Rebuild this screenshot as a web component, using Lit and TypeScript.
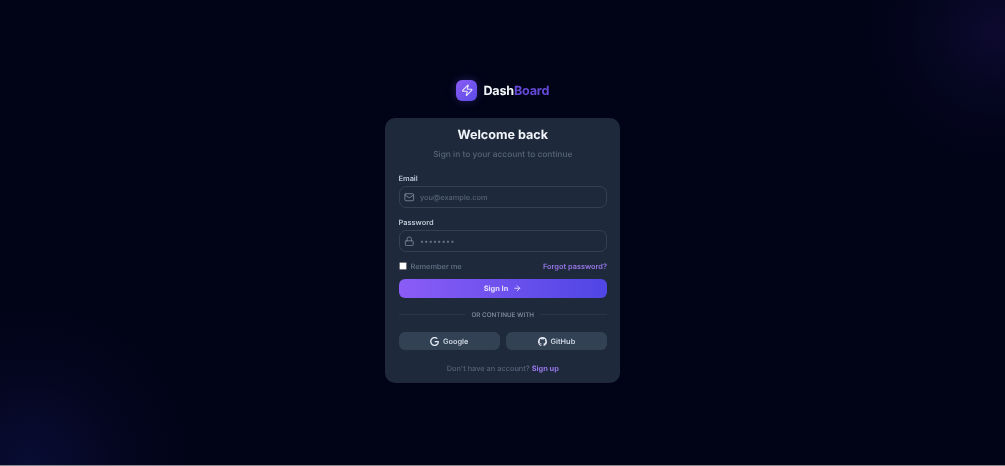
import { LitElement, html, css } from "lit";
import { customElement } from "lit/decorators.js";

@customElement("app-root")
export class AppRoot extends LitElement {
  static styles = css`
    :host {
      display: block;
      font-family: Inter, "Liberation Sans", sans-serif;
      text-rendering: geometricPrecision;
    }
    * { box-sizing: border-box; }
    .page {
      height: 466px;
      border-bottom: 1px solid #8a8a8e;
      display: flex;
      flex-direction: column;
      align-items: center;
      justify-content: flex-start;
      padding: 80px 0 0 0.5px;
      background:
        radial-gradient(circle at 99% 7%, rgba(88, 50, 200, 0.14) 0, rgba(60, 40, 160, 0.08) 60px, rgba(0, 0, 0, 0) 135px),
        radial-gradient(circle at 3% 100%, rgba(40, 50, 170, 0.2) 0, rgba(40, 40, 140, 0.1) 80px, rgba(0, 0, 0, 0) 165px),
        #010316;
    }
    .inner {
      display: flex;
      flex-direction: column;
      align-items: center;
      filter: blur(0.35px);
    }
    .brand {
      display: flex;
      align-items: center;
      gap: 6px;
      height: 21px;
      margin-bottom: 17px;
    }
    .logo {
      width: 21px;
      height: 21px;
      border-radius: 6px;
      background: linear-gradient(135deg, #8b5cf6, #5a4be6);
      box-shadow: 0 0 10px rgba(124, 92, 246, 0.3);
      display: flex;
      align-items: center;
      justify-content: center;
    }
    .logo svg { width: 12.5px; height: 12.5px; }
    .name {
      padding-top: 1px;
      font-size: 12.6px;
      font-weight: 700;
      color: #f1f5f9;
      letter-spacing: -0.2px;
    }
    .name span { color: #6549d8; }
    .card {
      width: 235px;
      height: 265px;
      background: #1e293b;
      border-radius: 10px;
      padding: 10px 13.25px 0;
      display: flex;
      flex-direction: column;
    }
    h1 {
      margin: 0;
      font-size: 12.6px;
      line-height: 16px;
      font-weight: 700;
      color: #f1f5f9;
      text-align: center;
    }
    .sub {
      margin: 5px 0 0;
      font-size: 8.4px;
      line-height: 12px;
      font-weight: 500;
      color: #566479;
      text-align: center;
    }
    label.lab {
      display: block;
      font-size: 7.4px;
      line-height: 10px;
      font-weight: 600;
      color: #bcc7d5;
    }
    .lab.first { margin-top: 13px; }
    .lab.second { margin-top: 10px; }
    .field {
      margin-top: 2px;
      height: 22px;
      border: 1px solid #334155;
      border-radius: 7px;
      background: #1e293b;
      display: flex;
      align-items: center;
      padding-left: 4.5px;
      gap: 5.5px;
      font-size: 7.4px;
      font-weight: 500;
      color: #566479;
    }
    .field svg { width: 10.5px; height: 10.5px; flex: none; }
    .dots { letter-spacing: 0.4px; font-size: 7.4px; color: #64748b; }
    .row {
      margin-top: 8px;
      height: 12px;
      display: flex;
      align-items: center;
      justify-content: space-between;
    }
    .rem {
      display: flex;
      align-items: center;
      gap: 4px;
      font-size: 7.4px;
      font-weight: 500;
      color: #64748b;
    }
    .check {
      width: 8px;
      height: 8px;
      background: #fff;
      border-radius: 1.5px;
      border: 0.5px solid #767676;
    }
    .link {
      font-size: 7.4px;
      font-weight: 600;
      color: #9676e6;
    }
    .signin {
      margin-top: 6.5px;
      height: 19px;
      padding-top: 1px;
      border-radius: 6px;
      background: linear-gradient(90deg, #8b5cf6, #4f46e5);
      display: flex;
      align-items: center;
      justify-content: center;
      gap: 5px;
      font-size: 7.4px;
      font-weight: 700;
      color: #e2dcfb;
    }
    .signin svg { width: 8.5px; height: 8.5px; }
    .divider {
      margin-top: 12px;
      display: flex;
      align-items: center;
      gap: 6px;
      font-size: 6.3px;
      line-height: 10px;
      font-weight: 600;
      color: #7a879a;
    }
    .divider i {
      flex: 1;
      height: 1px;
      background: #2a3648;
    }
    .socials {
      margin-top: 12px;
      display: grid;
      grid-template-columns: 1fr 1fr;
      gap: 6px;
    }
    .social {
      height: 18.5px;
      padding-top: 1px;
      border-radius: 6px;
      background: #334155;
      display: flex;
      align-items: center;
      justify-content: center;
      gap: 4px;
      font-size: 7.4px;
      font-weight: 600;
      color: #cbd5e1;
    }
    .social svg { width: 9px; height: 9px; }
    .foot {
      margin-top: 12.5px;
      font-size: 7.4px;
      line-height: 11px;
      font-weight: 500;
      text-align: center;
      color: #566479;
    }
    .foot b { font-weight: 700; color: #9676e6; }
  `;

  render() {
    return html`
      <div class="page">
        <div class="inner">
          <div class="brand">
            <div class="logo">
              <svg viewBox="0 0 24 24" fill="none" stroke="#ece9fd" stroke-width="2" stroke-linecap="round" stroke-linejoin="round">
                <path d="M4 14a1 1 0 0 1-.78-1.63l9.9-10.2a.5.5 0 0 1 .86.46l-1.92 6.02A1 1 0 0 0 13 10h7a1 1 0 0 1 .78 1.63l-9.9 10.2a.5.5 0 0 1-.86-.46l1.92-6.02A1 1 0 0 0 11 14z" />
              </svg>
            </div>
            <div class="name">Dash<span>Board</span></div>
          </div>
          <div class="card">
            <h1>Welcome back</h1>
            <p class="sub">Sign in to your account to continue</p>
            <label class="lab first">Email</label>
            <div class="field">
              <svg viewBox="0 0 24 24" fill="none" stroke="#7b889b" stroke-width="2" stroke-linecap="round" stroke-linejoin="round">
                <rect x="2" y="4" width="20" height="16" rx="2" />
                <path d="m22 7-8.97 5.7a1.94 1.94 0 0 1-2.06 0L2 7" />
              </svg>
              <span>you@example.com</span>
            </div>
            <label class="lab second">Password</label>
            <div class="field">
              <svg viewBox="0 0 24 24" fill="none" stroke="#7b889b" stroke-width="2" stroke-linecap="round" stroke-linejoin="round">
                <rect x="3" y="11" width="18" height="11" rx="2" />
                <path d="M7 11V7a5 5 0 0 1 10 0v4" />
              </svg>
              <span class="dots">••••••••</span>
            </div>
            <div class="row">
              <div class="rem"><span class="check"></span>Remember me</div>
              <span class="link">Forgot password?</span>
            </div>
            <div class="signin">
              <span>Sign In</span>
              <svg viewBox="0 0 24 24" fill="none" stroke="#e2dcfb" stroke-width="2.6" stroke-linecap="round" stroke-linejoin="round">
                <path d="M5 12h14" /><path d="m12 5 7 7-7 7" />
              </svg>
            </div>
            <div class="divider"><i></i><span>OR CONTINUE WITH</span><i></i></div>
            <div class="socials">
              <div class="social">
                <svg viewBox="0 0 24 24" fill="#e2e8f0">
                  <path d="M12.48 10.92v3.28h7.84c-.24 1.84-.85 3.18-1.79 4.12-1.15 1.15-2.94 2.4-6.05 2.4-4.83 0-8.6-3.89-8.6-8.72s3.77-8.72 8.6-8.72c2.6 0 4.5 1.02 5.9 2.34l2.31-2.31C18.75 1.44 16.13 0 12.48 0 5.87 0 .31 5.39.31 12s5.56 12 12.17 12c3.57 0 6.27-1.17 8.37-3.36 2.16-2.16 2.84-5.21 2.84-7.67 0-.76-.05-1.47-.17-2.05H12.48z" />
                </svg>
                <span>Google</span>
              </div>
              <div class="social">
                <svg viewBox="0 0 24 24" fill="#e2e8f0">
                  <path d="M12 .3a12 12 0 0 0-3.8 23.38c.6.12.83-.26.83-.57l-.02-2.23c-3.34.73-4.04-1.42-4.04-1.42-.55-1.39-1.34-1.76-1.34-1.76-1.08-.74.09-.73.09-.73 1.2.09 1.84 1.24 1.84 1.24 1.07 1.83 2.8 1.3 3.49 1 .1-.78.42-1.31.76-1.61-2.67-.3-5.47-1.33-5.47-5.93 0-1.31.47-2.38 1.24-3.22-.14-.3-.54-1.52.1-3.18 0 0 1-.32 3.3 1.23a11.5 11.5 0 0 1 6 0c2.28-1.55 3.29-1.23 3.29-1.23.64 1.66.24 2.88.12 3.18a4.65 4.65 0 0 1 1.23 3.22c0 4.61-2.8 5.63-5.48 5.92.42.36.81 1.1.81 2.22l-.01 3.29c0 .31.2.69.82.57A12 12 0 0 0 12 .3" />
                </svg>
                <span>GitHub</span>
              </div>
            </div>
            <div class="foot">Don't have an account? <b>Sign up</b></div>
          </div>
        </div>
      </div>
    `;
  }
}
